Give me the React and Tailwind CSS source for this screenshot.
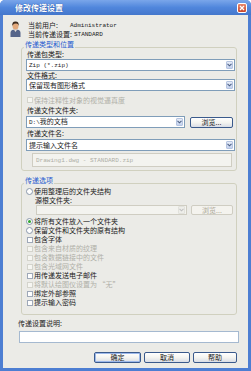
import React from "react";

const mono = "font-['Liberation_Mono','Noto_Sans_CJK_SC',monospace] text-[6px]";

function Chevron({ color = "#4d6185" }) {
  return (
    <svg width="5" height="4" viewBox="0 0 5 4">
      <path d="M0.5 0.8 L2.5 2.8 L4.5 0.8" fill="none" stroke={color} strokeWidth="1.1" />
    </svg>
  );
}

function Combo({ children, className = "", disabled = false }) {
  return (
    <div
      className={`flex items-center border ${
        disabled ? "border-[#cfcdc2] bg-[#f3f3ef]" : "border-[#7f9db9] bg-white"
      } ${className}`}
    >
      <div className="flex-1 pl-[2px] whitespace-nowrap overflow-hidden leading-[9px]">{children}</div>
      <div
        className={`w-[7px] h-[8px] mr-[1px] flex items-center justify-center rounded-[1px] border ${
          disabled ? "bg-[#eeeeea] border-[#e2e2dc]" : "bg-gradient-to-b from-[#e6ecf8] to-[#c3d1ee] border-[#b5c4e0]"
        }`}
      >
        <Chevron color={disabled ? "#c0c0c0" : "#4d6185"} />
      </div>
    </div>
  );
}

function Btn({ children, className = "", disabled = false, def = false }) {
  return (
    <div
      className={`flex items-center justify-center rounded-[2px] border leading-[9px] ${
        disabled
          ? "border-[#cfcdc2] text-[#aca899] bg-[#f4f3ee]"
          : "border-[#3a5a8c] bg-gradient-to-b from-white via-[#f4f4f0] to-[#d9dde6]"
      } ${def ? "shadow-[inset_0_0_0_1px_#9db9eb]" : ""} ${className}`}
    >
      {children}
    </div>
  );
}

function Check({ disabled = false }) {
  return (
    <span
      className={`inline-block w-[6px] h-[6px] border shrink-0 ${
        disabled ? "border-[#d4d4cc] bg-[#f6f6f2]" : "border-[#9ea8b8] bg-white"
      }`}
    />
  );
}

function Radio({ checked = false }) {
  return (
    <span className="w-[7px] h-[7px] rounded-full border border-[#8a98ac] bg-white flex items-center justify-center shrink-0">
      {checked && <span className="w-[3px] h-[3px] rounded-full bg-[#2fa52f]" />}
    </span>
  );
}

function CheckRow({ label, disabled = false }) {
  return (
    <div className={`h-[9px] flex items-center gap-[1px] ml-[1px] ${disabled ? "text-[#b0b0a8]" : ""}`}>
      <Check disabled={disabled} />
      <span>{label}</span>
    </div>
  );
}

function RadioRow({ label, checked = false }) {
  return (
    <div className="h-[9px] flex items-center gap-[1px]">
      <Radio checked={checked} />
      <span>{label}</span>
    </div>
  );
}

function UserIcon() {
  return (
    <svg width="11" height="17" viewBox="0 0 11 17">
      <path d="M0.5 17 L0.5 13 Q0.5 10 3.5 9.8 L7.5 9.8 Q10.5 10 10.5 13 L10.5 17 Z" fill="#56658a" />
      <path d="M4 9.8 L5.5 12 L7 9.8 Z" fill="#e8e0d8" />
      <ellipse cx="5.5" cy="6" rx="3" ry="3.6" fill="#e2a97c" />
      <path d="M2.2 6 Q2 1.5 5.5 1.6 Q9 1.5 8.8 6 Q8.4 3.8 6.5 3.6 Q4 3.4 2.8 5 Z" fill="#3b2a1e" />
    </svg>
  );
}

export default function App() {
  return (
    <div className="w-[251px] h-[371px] bg-white">
      <div className="w-[251px] h-[371px] flex flex-col rounded-t-[5px] overflow-hidden bg-[#4d7ed2] font-['Noto_Sans_CJK_SC',sans-serif] text-[7px] leading-[9px] text-[#1a1a1a]">
        {/* Title bar */}
        <div className="h-[15px] shrink-0 flex items-center bg-gradient-to-b from-[#7aa6ea] via-[#5086dc] to-[#4477cc]">
          <span className="ml-[15px] text-white font-bold text-[8px] leading-[10px] [text-shadow:0_0_1px_#1c3f8a]">
            修改传递设置
          </span>
          <div className="ml-auto mr-[4px] mt-[1px] w-[10px] h-[10px] rounded-[2px] border border-white bg-gradient-to-b from-[#e9866a] to-[#c8462a] flex items-center justify-center">
            <svg width="6" height="6" viewBox="0 0 6 6">
              <path d="M1 1 L5 5 M5 1 L1 5" stroke="white" strokeWidth="1.3" />
            </svg>
          </div>
        </div>

        {/* Client area */}
        <div className="flex-1 mx-[3px] mb-[3px] bg-[#ebebe7] flex flex-col">
          {/* Header */}
          <div className="flex pt-[5px]">
            <div className="ml-[7px]">
              <UserIcon />
            </div>
            <div className="ml-[7px] pt-[1px] flex flex-col">
              <div className="h-[9px] flex items-center">
                <span className="w-[42px]">当前用户:</span>
                <span className={mono}>Administrator</span>
              </div>
              <div className="h-[9px] flex items-center">
                <span>当前传递设置:</span>
                <span className={`${mono} ml-[2px]`}>STANDARD</span>
              </div>
            </div>
          </div>

          {/* Group 1 */}
          <fieldset className="mt-[1px] ml-[18px] w-[216px] border border-[#d0d0bf] rounded-[3px] pl-[4px] pr-[1px] pb-[3px]">
            <legend className="leading-[9px] pb-[6px] -ml-[2px] px-[1px] text-[#1f5bd0]">传递类型和位置</legend>
            <div className="flex flex-col -mt-[6px]">
              <div className="h-[10px] flex items-center ml-[1px]">传递包类型:</div>
              <Combo className="h-[12px]">
                <span className={mono}>Zip (*.zip)</span>
              </Combo>
              <div className="h-[8px] flex items-center ml-[1px]">文件格式:</div>
              <Combo className="h-[12px]">保留现有图形格式</Combo>
              <div className="mt-[4px] h-[10px] flex items-center gap-[1px] ml-[1px] text-[#b0b0a8]">
                <Check disabled />
                <span>保持注释性对象的视觉逼真度</span>
              </div>
              <div className="h-[10px] flex items-center ml-[1px]">传递文件文件夹:</div>
              <div className="mt-[1px] h-[12px] flex items-center">
                <Combo className="h-[12px] w-[159px]">
                  <span className={mono}>D:\</span>我的文档
                </Combo>
                <Btn className="ml-[5px] w-[43px] h-[11px]">浏览...</Btn>
              </div>
              <div className="h-[10px] flex items-center ml-[1px]">传递文件名:</div>
              <Combo className="mt-[1px] h-[12px]">提示输入文件名</Combo>
              <div className="mt-[2px] h-[14px] ml-[6px] mr-[3px] border border-[#cfcdc2] bg-[#f3f3ef] flex items-center pl-[3px] text-[#aeaea6]">
                <span className={mono}>Drawing1.dwg - STANDARD.zip</span>
              </div>
            </div>
          </fieldset>

          {/* Group 2 */}
          <fieldset className="mt-[5px] ml-[18px] w-[216px] border border-[#d0d0bf] rounded-[3px] pl-[4px] pr-[1px] pb-[7px]">
            <legend className="leading-[9px] pb-[6px] -ml-[2px] px-[1px] text-[#1f5bd0]">传递选项</legend>
            <div className="flex flex-col -mt-[4px]">
              <RadioRow label="使用整理后的文件夹结构" />
              <div className="h-[8px] flex items-center ml-[9px]">源根文件夹:</div>
              <div className="mt-[1px] h-[10px] flex items-center">
                <Combo disabled className="ml-[10px] w-[151px] h-[10px]" />
                <Btn disabled className="ml-[4px] w-[42px] h-[10px]">浏览...</Btn>
              </div>
              <div className="mt-[2px] flex flex-col">
                <RadioRow label="将所有文件放入一个文件夹" checked />
                <RadioRow label="保留文件和文件夹的原有结构" />
                <CheckRow label="包含字体" />
                <CheckRow label="包含来自材质的纹理" disabled />
                <CheckRow label="包含数据链接中的文件" disabled />
                <CheckRow label="包含光域网文件" disabled />
                <CheckRow label="用传递发送电子邮件" />
                <CheckRow label="将默认绘图仪设置为 “无”" disabled />
                <CheckRow label="绑定外部参照" />
                <CheckRow label="提示输入密码" />
              </div>
            </div>
          </fieldset>

          <div className="mt-[3px] h-[10px] flex items-center ml-[15px]">传递设置说明:</div>
          <div className="mt-[3px] h-[12px] ml-[16px] w-[220px] border border-[#a5b9d0] bg-white" />

          <div className="mt-[9px] flex justify-end gap-[3px] pr-[11px]">
            <Btn def className="w-[47px] h-[11px]">确定</Btn>
            <Btn className="w-[46px] h-[11px]">取消</Btn>
            <Btn className="w-[44px] h-[11px]">帮助</Btn>
          </div>
        </div>
      </div>
    </div>
  );
}
